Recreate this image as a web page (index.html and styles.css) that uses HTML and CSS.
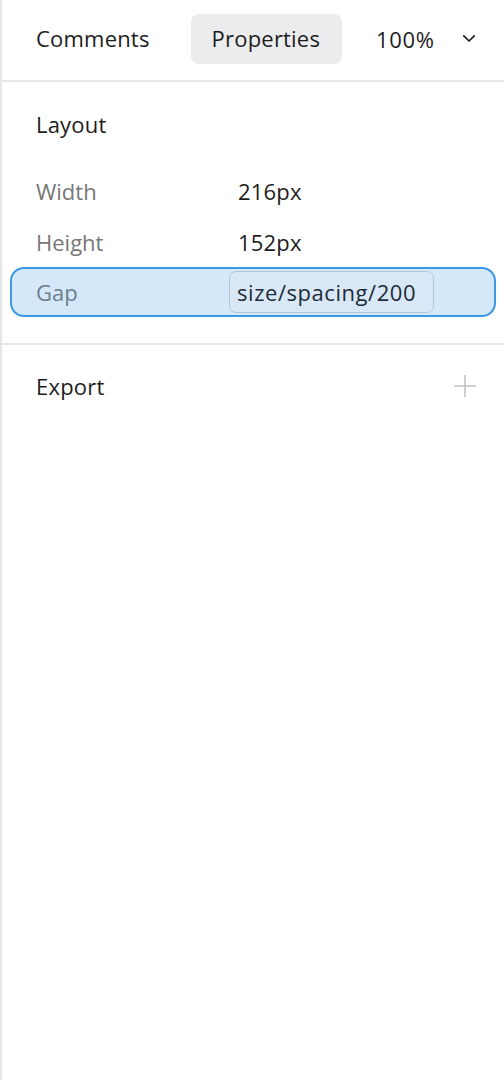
FILE: index.html
```html
<!DOCTYPE html>
<html>
<head>
<meta charset="utf-8">
<link rel="stylesheet" href="styles.css">
</head>
<body>
<div class="panel">
  <header class="tabs">
    <div class="tab">Comments</div>
    <div class="tab active">Properties</div>
    <div class="zoom">
      <span>100%</span>
      <svg class="chev" width="14" height="9" viewBox="0 0 14 9"><path d="M1.8 1.8 L7 7 L12.2 1.8" fill="none" stroke="#1d1d1d" stroke-width="1.7" stroke-linecap="round" stroke-linejoin="round"/></svg>
    </div>
  </header>
  <section class="section layout">
    <h2 class="title">Layout</h2>
    <div class="rows">
      <div class="row"><span class="label">Width</span><span class="value">216px</span></div>
      <div class="row"><span class="label">Height</span><span class="value">152px</span></div>
      <div class="row selected"><span class="label">Gap</span><span class="value token">size/spacing/200</span></div>
    </div>
  </section>
  <section class="section export">
    <h2 class="title">Export</h2>
    <svg class="plus" width="24" height="24" viewBox="0 0 24 24"><path d="M12 1 V23 M1 12 H23" stroke="#c2c2c2" stroke-width="1.6"/></svg>
  </section>
</div>
</body>
</html>
```
FILE: styles.css
```css
html, body {
  margin: 0;
  padding: 0;
  background: #fff;
}
body {
  font-family: "Open Sans", "Noto Sans", sans-serif;
  color: #1d1d1d;
}
.panel {
  width: 504px;
  min-height: 1080px;
  border-left: 2px solid #e6e6e6;
  box-sizing: border-box;
}
.tabs {
  display: flex;
  align-items: center;
  height: 82px;
  box-sizing: border-box;
  padding: 0 0 2px 34px;
  border-bottom: 2px solid #e8e8e8;
  font-size: 22px;
  letter-spacing: 0.2px;
}
.tab {
  height: 50px;
  line-height: 48px;
  border-radius: 8px;
}
.tab.active {
  background: #ececee;
  margin-left: 41px;
  padding: 0 22px 0 21px;
}
.zoom {
  display: flex;
  align-items: center;
  margin-left: 34px;
  letter-spacing: 0.6px;
}
.chev {
  margin-left: 28px;
  margin-top: -2px;
}
.section {
  border-bottom: 2px solid #e8e8e8;
}
.title {
  margin: 0;
  font-size: 22px;
  font-weight: 400;
  padding-left: 34px;
  letter-spacing: 0.2px;
}
.layout {
  padding: 27px 0 26px;
}
.rows {
  margin-top: 26px;
  display: flex;
  flex-direction: column;
  padding: 0 8px;
}
.row {
  display: flex;
  align-items: center;
  height: 51px;
  font-size: 22px;
  border: 2px solid transparent;
  border-radius: 14px;
  box-sizing: border-box;
}
.label {
  width: 202px;
  padding-left: 24px;
  color: #777;
}
.value {
  color: #1d1d1d;
  letter-spacing: 0.2px;
}
.selected {
  height: 50px;
  background: #d5e8fa;
  border-color: #3a98e6;
}
.selected .label {
  color: #6b7e8f;
}
.token {
  color: #1e2c38;
  width: 205px;
  height: 42px;
  line-height: 40px;
  box-sizing: border-box;
  padding: 0 0 0 7px;
  margin-left: -9px;
  border: 1.5px solid #b3c6d6;
  border-radius: 7px;
  background: #d8e8f6;
  letter-spacing: 0.55px;
}
.export {
  display: flex;
  align-items: center;
  justify-content: space-between;
  padding: 26px 27px 0 0;
  border-bottom: none;
}
```
